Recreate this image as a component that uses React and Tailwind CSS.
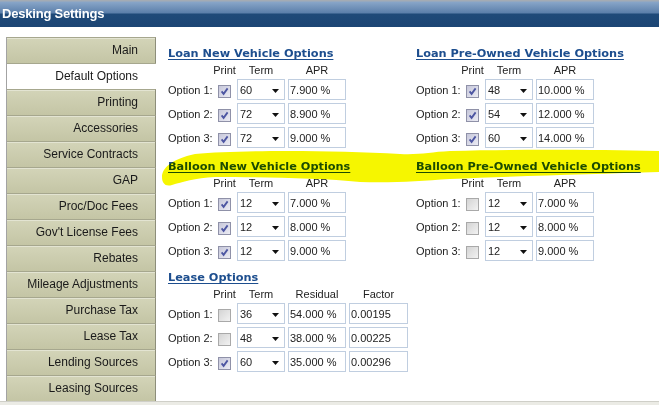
import React from "react";

const NAV = [
  "Main",
  "Default Options",
  "Printing",
  "Accessories",
  "Service Contracts",
  "GAP",
  "Proc/Doc Fees",
  "Gov't License Fees",
  "Rebates",
  "Mileage Adjustments",
  "Purchase Tax",
  "Lease Tax",
  "Lending Sources",
  "Leasing Sources",
];

const loanNew = [
  { print: true, term: "60", apr: "7.900 %" },
  { print: true, term: "72", apr: "8.900 %" },
  { print: true, term: "72", apr: "9.000 %" },
];

const loanPre = [
  { print: true, term: "48", apr: "10.000 %" },
  { print: true, term: "54", apr: "12.000 %" },
  { print: true, term: "60", apr: "14.000 %" },
];

const balloonNew = [
  { print: true, term: "12", apr: "7.000 %" },
  { print: true, term: "12", apr: "8.000 %" },
  { print: true, term: "12", apr: "9.000 %" },
];

const balloonPre = [
  { print: false, term: "12", apr: "7.000 %" },
  { print: false, term: "12", apr: "8.000 %" },
  { print: false, term: "12", apr: "9.000 %" },
];

const lease = [
  { print: false, term: "36", apr: "54.000 %", factor: "0.00195" },
  { print: false, term: "48", apr: "38.000 %", factor: "0.00225" },
  { print: true, term: "60", apr: "35.000 %", factor: "0.00296" },
];

function Check({ checked }) {
  return (
    <span
      className={
        checked
          ? "mt-[6px] flex h-[13px] w-[13px] items-center justify-center border border-[#8f91a8] bg-[linear-gradient(135deg,#c6c7da,#ececf4)]"
          : "mt-[6px] flex h-[13px] w-[13px] items-center justify-center border border-[#a9a9a9] bg-[linear-gradient(135deg,#d4d4d4,#f2f2f2)]"
      }
    >
      {checked ? (
        <svg width="9" height="9" viewBox="0 0 9 9">
          <path d="M1.6 4.4 L3.6 6.9 L7.6 1.4" fill="none" stroke="#4d56a2" strokeWidth="1.8" />
        </svg>
      ) : null}
    </span>
  );
}

function Select({ value }) {
  return (
    <div className="ml-[6px] flex h-[21px] w-[48px] items-start justify-between border border-[#c0cee0] bg-white pl-[2px] pr-[5px] pt-[4px] leading-[13px]">
      <span>{value}</span>
      <svg className="mt-[5px]" width="7" height="4" viewBox="0 0 7 4">
        <path d="M0 0 H7 L3.5 4 Z" fill="#111" />
      </svg>
    </div>
  );
}

function Field({ value, width = "w-[58px]" }) {
  return (
    <div className={`ml-[3px] h-[21px] ${width} border border-[#c0cee0] bg-white pl-[1px] pt-[4px] leading-[13px]`}>
      {value}
    </div>
  );
}

function OptionGroup({ title, rows, heads = ["APR"] }) {
  return (
    <section>
      <h2 className="h-[13px] whitespace-nowrap font-['DejaVu_Sans',Verdana,sans-serif] text-[11.3px] font-bold leading-[13px] text-[#1d4e8e] underline decoration-1 underline-offset-[2px]">
        {title}
      </h2>
      <div className="mt-[4px] flex h-[12px] items-center leading-[12px] text-[#222]">
        <div className="w-[50px]" />
        <div className="flex w-[13px] justify-center">Print</div>
        <div className="ml-[6px] w-[48px] text-center">Term</div>
        <div className="ml-[3px] w-[58px] text-center">{heads[0]}</div>
        {heads[1] ? <div className="ml-[3px] w-[59px] text-center">{heads[1]}</div> : null}
      </div>
      <div className="mt-[3px] flex flex-col gap-[3px]">
        {rows.map((row, i) => (
          <div key={i} className="flex items-start text-[#222]">
            <div className="mt-[5px] w-[50px] whitespace-nowrap leading-[13px]">Option {i + 1}:</div>
            <Check checked={row.print} />
            <Select value={row.term} />
            <Field value={row.apr} />
            {row.factor ? <Field value={row.factor} width="w-[59px]" /> : null}
          </div>
        ))}
      </div>
    </section>
  );
}

export default function App() {
  return (
    <div className="relative flex h-[405px] w-[659px] flex-col overflow-hidden bg-white font-['Liberation_Sans',Arial,sans-serif] text-[11px]">
      <header className="h-[27px] shrink-0 bg-[linear-gradient(180deg,#a3abb4_0px,#a3abb4_1px,#88a5c8_2px,#5b7faa_13px,#1f4a79_14px,#1c4574_27px)] pl-[2px] pt-[6px] text-[13px] font-bold leading-[15px] tracking-[-0.2px] text-white">
        Desking Settings
      </header>

      <div className="flex min-h-0 flex-1">
        <nav className="ml-[6px] mt-[10px] w-[150px] shrink-0 border-l border-[#a3a3a3]">
          {NAV.map((item) =>
            item === "Default Options" ? (
              <div
                key={item}
                className="h-[26px] whitespace-nowrap border-t border-[#a6a78e] bg-white pr-[18px] text-right text-[12px] leading-[25px] text-[#1a1a1a]"
              >
                {item}
              </div>
            ) : (
              <div
                key={item}
                className="h-[26px] whitespace-nowrap border-r border-t border-r-[#8d8e7a] border-t-[#a6a78e] bg-[linear-gradient(180deg,#d3d4b8,#c4c5a5)] pr-[17px] text-right text-[12px] leading-[25px] text-[#1a1a1a] shadow-[inset_0_1px_0_#e3e4d2]"
              >
                {item}
              </div>
            )
          )}
        </nav>

        <main className="shrink-0 pl-[12px] pt-[20px]">
          <div className="grid grid-cols-[248px_248px]">
            <OptionGroup title="Loan New Vehicle Options" rows={loanNew} />
            <OptionGroup title="Loan Pre-Owned Vehicle Options" rows={loanPre} />
          </div>
          <div className="mt-[12px] grid grid-cols-[248px_248px]">
            <OptionGroup title="Balloon New Vehicle Options" rows={balloonNew} />
            <OptionGroup title="Balloon Pre-Owned Vehicle Options" rows={balloonPre} />
          </div>
          <div className="mt-[10px]">
            <OptionGroup title="Lease Options" rows={lease} heads={["Residual", "Factor"]} />
          </div>
        </main>
      </div>

      <div className="h-[4px] shrink-0 border-t border-[#cfcfc8] bg-[#ebebe5]" />

      <svg
        className="pointer-events-none absolute left-0 top-0 mix-blend-multiply"
        width="659"
        height="405"
        viewBox="0 0 659 405"
      >
        <path
          d="M162 177 C162 168 172 159 195 154 C240 150 330 150 400 154 C420 155 430 152 450 151 C530 149 600 150 662 151 L662 172 C600 174 520 176 450 179 C420 181 395 183 360 182 C320 178 260 177 215 177 C195 178 182 182 172 185 C165 187 162 183 162 177 Z"
          fill="#f6f600"
        />
      </svg>
    </div>
  );
}
